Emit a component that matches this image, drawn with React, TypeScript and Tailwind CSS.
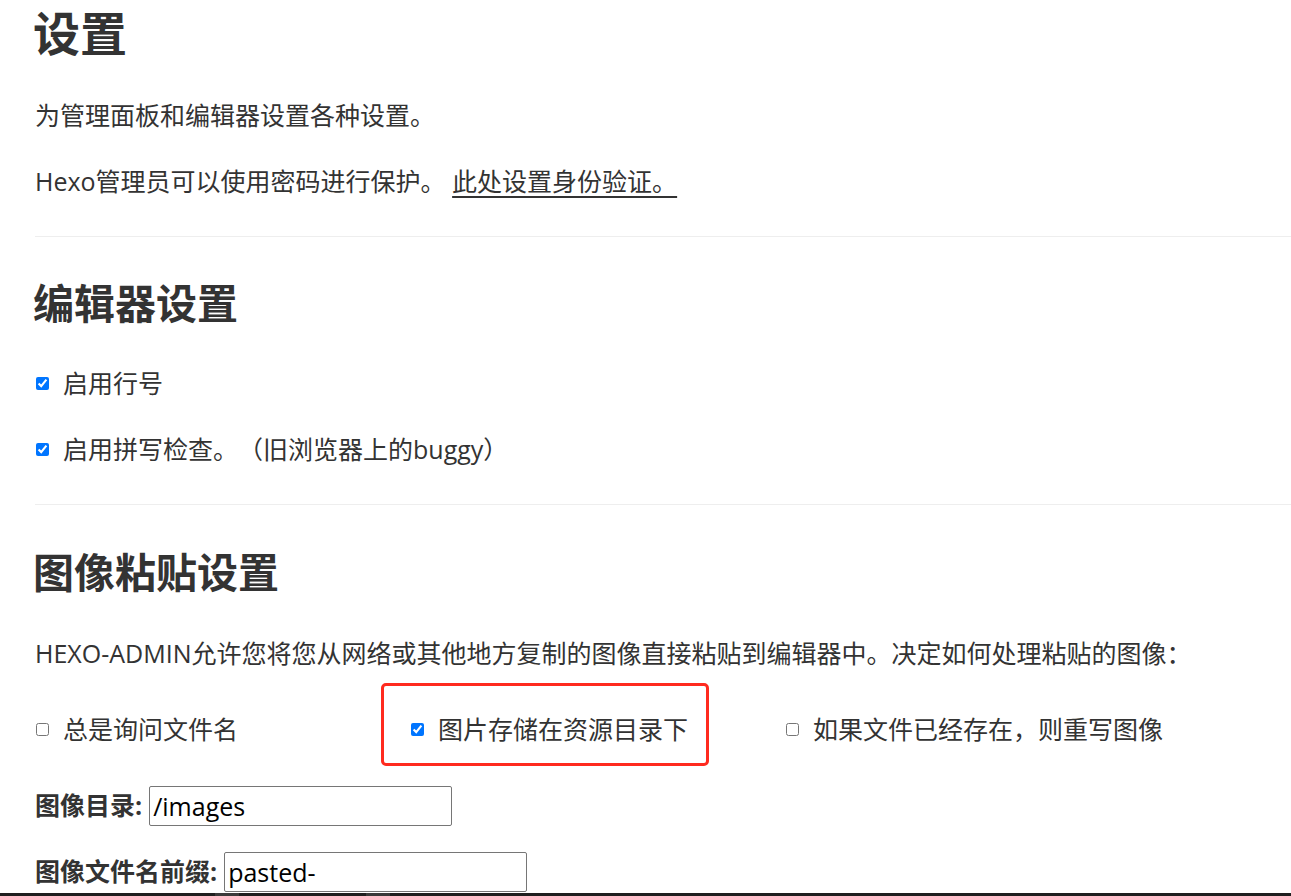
import React from 'react';

const font = { fontFamily: '"Open Sans", "Noto Sans CJK SC", sans-serif' };

type TCheckProps = {
  label: string;
  checked?: boolean;
};

const CheckRow = ({ label, checked = false }: TCheckProps) => (
  <label className="flex flex-row items-center h-[34px] text-[25px] leading-[34px] text-[#333] whitespace-nowrap">
    <input
      type="checkbox"
      defaultChecked={checked}
      className="w-[13px] h-[13px] ml-[1px] mr-[14px] shrink-0"
    />
    <span>{label}</span>
  </label>
);

const Divider = () => <div className="h-px bg-[#eeeeee] w-full" />;

export default function App() {
  return (
    <div className="bg-white min-h-screen overflow-hidden [text-spacing-trim:space-all]" style={font}>
      <div className="pl-[35px] text-[#333]">
        <h1 className="text-[47px] leading-[52px] font-bold mt-[7px] -ml-[2px] text-[#333]">设置</h1>

        <p className="text-[25px] leading-[34px] mt-[39px]">为管理面板和编辑器设置各种设置。</p>
        <p className="text-[25px] leading-[34px] mt-[32px]">
          Hexo管理员可以使用密码进行保护。{' '}
          <a href="#" className="underline underline-offset-[5px] text-[#333]">
            此处设置身份验证。
          </a>
        </p>

        <div className="mt-[38px]">
          <Divider />
        </div>

        <h2 className="text-[41px] leading-[46px] font-bold mt-[43px] -ml-[2px]">编辑器设置</h2>

        <div className="mt-[40px]">
          <CheckRow label="启用行号" checked />
        </div>
        <div className="mt-[32px]">
          <CheckRow label="启用拼写检查。（旧浏览器上的buggy）" checked />
        </div>

        <div className="mt-[38px]">
          <Divider />
        </div>

        <h2 className="text-[41px] leading-[46px] font-bold mt-[44px] -ml-[2px]">图像粘贴设置</h2>

        <p className="text-[25px] leading-[34px] mt-[41px] whitespace-nowrap">
          HEXO-ADMIN允许您将您从网络或其他地方复制的图像直接粘贴到编辑器中。决定如何处理粘贴的图像：
        </p>

        <div className="grid grid-cols-[375px_375px_375px] mt-[42px]">
          <CheckRow label="总是询问文件名" />
          <div className="relative">
            <CheckRow label="图片存储在资源目录下" checked />
            <div className="absolute left-[-29px] top-[-29px] w-[328px] h-[83px] border-[3px] border-[#ff2a1f] rounded-[5px] pointer-events-none" />
          </div>
          <CheckRow label="如果文件已经存在，则重写图像" />
        </div>

        <div className="flex flex-row items-center mt-[40px] text-[25px]">
          <span className="font-bold text-[#333] mr-[7px]">图像目录:</span>
          <input
            type="text"
            defaultValue="/images"
            className="w-[303px] h-[40px] border border-[#767676] rounded-[2px] px-[3px] text-[25px] text-black"
            style={font}
          />
        </div>

        <div className="flex flex-row items-center mt-[26px] text-[25px]">
          <span className="font-bold text-[#333] mr-[7px]">图像文件名前缀:</span>
          <input
            type="text"
            defaultValue="pasted-"
            className="w-[303px] h-[40px] border border-[#767676] rounded-[2px] px-[3px] text-[25px] text-black"
            style={font}
          />
        </div>
      </div>

      <div className="fixed left-0 right-0 bottom-0 h-[3px] bg-[#1f1f1f] flex flex-row">
        <div className="w-[215px]" />
        <div className="w-[24px] bg-[#3a3a3a]" />
        <div className="w-[127px]" />
        <div className="w-[24px] bg-[#3a3a3a]" />
      </div>
    </div>
  );
}
